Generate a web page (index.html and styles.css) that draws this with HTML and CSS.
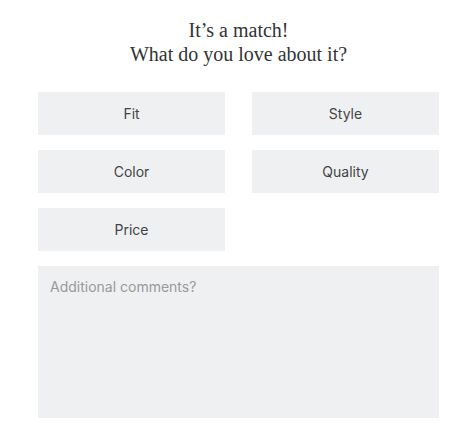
FILE: index.html
```html
<!DOCTYPE html>
<html lang="en">
<head>
    <meta charset="UTF-8">
    <meta name="viewport" content="width=device-width, initial-scale=1.0">
    <title>Feedback</title>
    <link rel="stylesheet" href="styles.css">
</head>
<body>
    <div class="feedback">
        <h1 class="title">It’s a match!<br>What do you love about it?</h1>

        <div class="options">
            <button class="option">Fit</button>
            <button class="option">Style</button>
            <button class="option">Color</button>
            <button class="option">Quality</button>
            <button class="option">Price</button>
        </div>

        <textarea class="comments" placeholder="Additional comments?"></textarea>
    </div>
</body>
</html>
```

FILE: styles.css
```css
body {
    margin: 0;
    background-color: #ffffff;
    font-family: "Inter", "Liberation Sans", sans-serif;
}
.feedback {
    width: 401px;
    margin-left: 38px;
    padding-top: 18px;
}
.title {
    margin: 0 0 26px;
    text-align: center;
    font-family: "Liberation Serif", serif;
    font-weight: normal;
    font-size: 20px;
    line-height: 24px;
    color: #333333;
}
.options {
    display: grid;
    grid-template-columns: 187px 187px;
    column-gap: 27px;
    row-gap: 15px;
}
.option {
    height: 43px;
    padding: 0;
    border: none;
    background-color: #eff0f2;
    font-family: inherit;
    font-size: 14px;
    color: #444444;
    cursor: pointer;
}
.comments {
    display: block;
    box-sizing: border-box;
    width: 401px;
    height: 152px;
    margin-top: 15px;
    padding: 12px 12px;
    border: none;
    resize: none;
    background-color: #eff0f2;
    font-family: inherit;
    font-size: 14px;
    color: #444444;
}
.comments::placeholder {
    color: #999999;
}
```
